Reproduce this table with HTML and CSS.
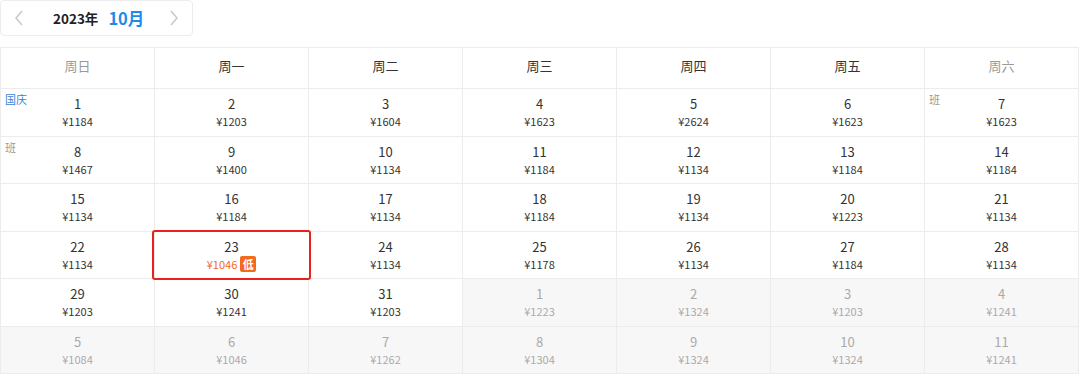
FILE: index.html
```html
<!DOCTYPE html>
<html lang="zh">
<head>
<meta charset="utf-8">
<link rel="stylesheet" href="styles.css">
</head>
<body>
<div class="nav">
  <svg class="chev" width="10" height="16" viewBox="0 0 10 16"><path d="M8 1 L2 8 L8 15" fill="none" stroke="#c8c8c8" stroke-width="1.5"/></svg>
  <span class="year">2023年</span>
  <span class="month">10月</span>
  <svg class="chev" width="10" height="16" viewBox="0 0 10 16"><path d="M2 1 L8 8 L2 15" fill="none" stroke="#c8c8c8" stroke-width="1.5"/></svg>
</div>
<div class="cal">
  <div class="wk weekend">周日</div>
  <div class="wk">周一</div>
  <div class="wk">周二</div>
  <div class="wk">周三</div>
  <div class="wk">周四</div>
  <div class="wk">周五</div>
  <div class="wk weekend">周六</div>

  <div class="cell"><span class="tag holiday">国庆</span><span class="d">1</span><span class="p">¥1184</span></div>
  <div class="cell"><span class="d">2</span><span class="p">¥1203</span></div>
  <div class="cell"><span class="d">3</span><span class="p">¥1604</span></div>
  <div class="cell"><span class="d">4</span><span class="p">¥1623</span></div>
  <div class="cell"><span class="d">5</span><span class="p">¥2624</span></div>
  <div class="cell"><span class="d">6</span><span class="p">¥1623</span></div>
  <div class="cell"><span class="tag work">班</span><span class="d">7</span><span class="p">¥1623</span></div>

  <div class="cell"><span class="tag work">班</span><span class="d">8</span><span class="p">¥1467</span></div>
  <div class="cell"><span class="d">9</span><span class="p">¥1400</span></div>
  <div class="cell"><span class="d">10</span><span class="p">¥1134</span></div>
  <div class="cell"><span class="d">11</span><span class="p">¥1184</span></div>
  <div class="cell"><span class="d">12</span><span class="p">¥1134</span></div>
  <div class="cell"><span class="d">13</span><span class="p">¥1184</span></div>
  <div class="cell"><span class="d">14</span><span class="p">¥1184</span></div>

  <div class="cell"><span class="d">15</span><span class="p">¥1134</span></div>
  <div class="cell"><span class="d">16</span><span class="p">¥1184</span></div>
  <div class="cell"><span class="d">17</span><span class="p">¥1134</span></div>
  <div class="cell"><span class="d">18</span><span class="p">¥1184</span></div>
  <div class="cell"><span class="d">19</span><span class="p">¥1134</span></div>
  <div class="cell"><span class="d">20</span><span class="p">¥1223</span></div>
  <div class="cell"><span class="d">21</span><span class="p">¥1134</span></div>

  <div class="cell"><span class="d">22</span><span class="p">¥1134</span></div>
  <div class="cell selected"><span class="d">23</span><span class="p low">¥1046<span class="badge">低</span></span></div>
  <div class="cell"><span class="d">24</span><span class="p">¥1134</span></div>
  <div class="cell"><span class="d">25</span><span class="p">¥1178</span></div>
  <div class="cell"><span class="d">26</span><span class="p">¥1134</span></div>
  <div class="cell"><span class="d">27</span><span class="p">¥1184</span></div>
  <div class="cell"><span class="d">28</span><span class="p">¥1134</span></div>

  <div class="cell"><span class="d">29</span><span class="p">¥1203</span></div>
  <div class="cell"><span class="d">30</span><span class="p">¥1241</span></div>
  <div class="cell"><span class="d">31</span><span class="p">¥1203</span></div>
  <div class="cell off"><span class="d">1</span><span class="p">¥1223</span></div>
  <div class="cell off"><span class="d">2</span><span class="p">¥1324</span></div>
  <div class="cell off"><span class="d">3</span><span class="p">¥1203</span></div>
  <div class="cell off"><span class="d">4</span><span class="p">¥1241</span></div>

  <div class="cell off"><span class="d">5</span><span class="p">¥1084</span></div>
  <div class="cell off"><span class="d">6</span><span class="p">¥1046</span></div>
  <div class="cell off"><span class="d">7</span><span class="p">¥1262</span></div>
  <div class="cell off"><span class="d">8</span><span class="p">¥1304</span></div>
  <div class="cell off"><span class="d">9</span><span class="p">¥1324</span></div>
  <div class="cell off"><span class="d">10</span><span class="p">¥1324</span></div>
  <div class="cell off"><span class="d">11</span><span class="p">¥1241</span></div>
</div>
</body>
</html>
```

FILE: styles.css
```css
* { box-sizing: border-box; }
body {
  margin: 0;
  background: #fff;
  font-family: "Noto Sans CJK SC", "Noto Sans", sans-serif;
  color: #333;
}
.nav {
  width: 193px;
  height: 36px;
  border: 1px solid #ececec;
  border-radius: 4px;
  display: flex;
  align-items: center;
  padding: 0 13px 1px 13px;
}
.chev { flex: none; }
.year {
  margin-left: 29px;
  font-size: 13.5px;
  font-weight: 700;
  color: #222;
}
.month {
  margin-left: 10px;
  font-size: 16.5px;
  font-weight: 700;
  color: #1f8ae8;
  flex: 1;
}
.cal {
  margin-top: 11px;
  width: 1079px;
  display: grid;
  grid-template-columns: repeat(7, 154px);
  grid-template-rows: 41px repeat(6, 47.5px);
  border-top: 1px solid #ececec;
  border-left: 1px solid #ececec;
}
.wk, .cell {
  border-right: 1px solid #ececec;
  border-bottom: 1px solid #ececec;
}
.wk {
  display: flex;
  align-items: center;
  justify-content: center;
  font-size: 13px;
  padding-bottom: 5px;
  color: #333;
}
.wk.weekend { color: #999; }
.cell {
  position: relative;
  display: flex;
  flex-direction: column;
  align-items: center;
  padding-top: 6px;
}
.d {
  font-size: 13px;
  line-height: 18px;
  color: #333;
}
.p {
  font-size: 11px;
  line-height: 16px;
  color: #333;
  display: flex;
  align-items: center;
}
.off { background: #f7f7f7; }
.off .d, .off .p { color: #aaa; }
.selected {
  border: 2px solid #e8221b;
  border-radius: 3px;
  margin: -2px -2px -1px -3px;
  padding-top: 6px;
  z-index: 1;
}
.p.low { color: #f26a1b; }
.badge {
  margin-left: 3px;
  width: 16px;
  height: 16px;
  background: #f26a1b;
  color: #fff;
  font-size: 11px;
  line-height: 16px;
  text-align: center;
  border-radius: 2px;
  font-weight: 700;
}
.tag {
  position: absolute;
  top: 2px;
  left: 0;
  font-size: 11px;
  line-height: 17px;
  padding: 0 9px 0 4px;
  background: #fff;
  box-shadow: 1px 1px 2px rgba(0,0,0,0.08);
  clip-path: polygon(0 0, 100% 0, 80% 100%, 0 100%);
}
.tag.holiday { color: #3a82d6; }
.tag.work { color: #999; }
```
